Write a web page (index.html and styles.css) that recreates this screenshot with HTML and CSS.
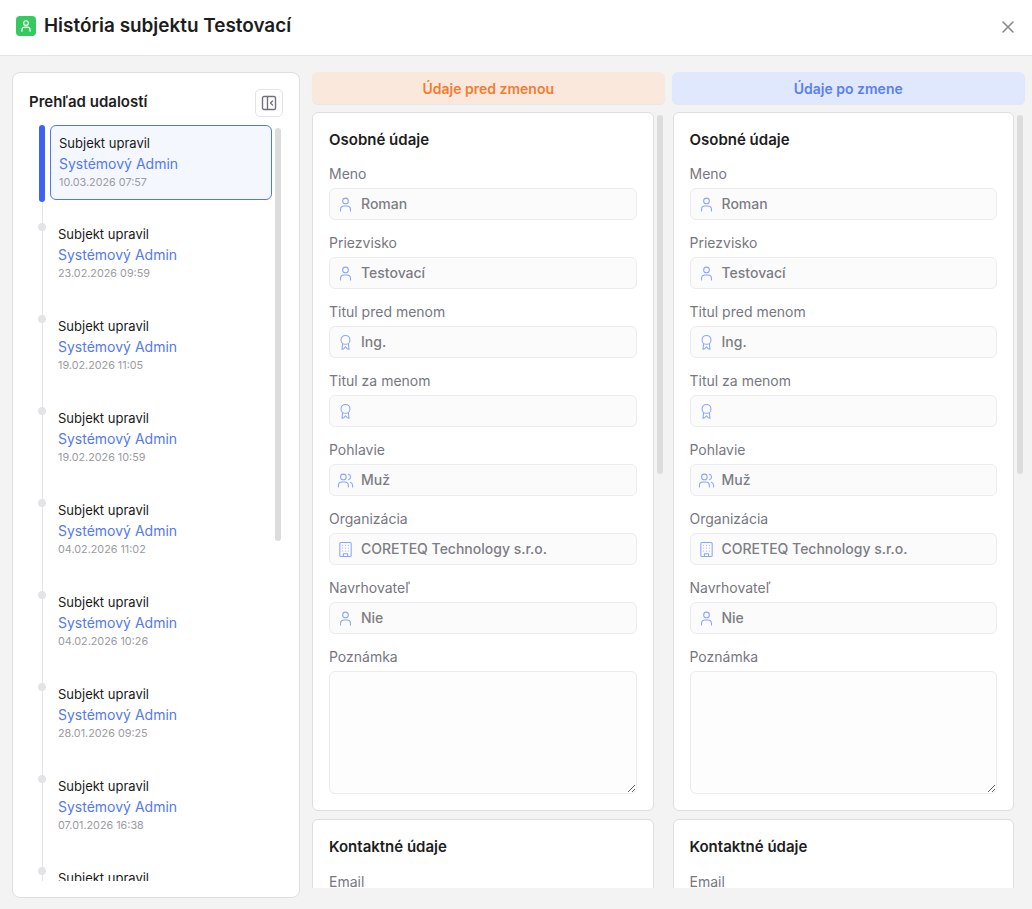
FILE: index.html
```html
<!DOCTYPE html>
<html lang="sk">
<head>
<meta charset="utf-8">
<title>História subjektu</title>
<link rel="stylesheet" href="styles.css">
</head>
<body>
<svg class="sprites" width="0" height="0" aria-hidden="true">
  <symbol id="i-user" viewBox="0 0 24 24"><circle cx="12" cy="7" r="4"/><path d="M5 21v-2a5 5 0 0 1 5-5h4a5 5 0 0 1 5 5v2"/></symbol>
  <symbol id="i-award" viewBox="0 0 24 24"><circle cx="12" cy="8.300" r="6.300"/><path d="M8 13.500 7 21.500l2.700-.8L12 18l2.300 2.700 2.700.8-1-8"/></symbol>
  <symbol id="i-users" viewBox="0 0 24 24"><circle cx="9" cy="7" r="4"/><path d="M2 21v-2a5 5 0 0 1 5-5h4a5 5 0 0 1 5 5v2M16 3.100a4 4 0 0 1 0 7.800M22 21v-2a5 5 0 0 0-3-4.500"/></symbol>
  <symbol id="i-building" viewBox="0 0 24 24"><rect x="4" y="2" width="16" height="20" rx="1.500"/><path d="M9 22v-4h6v4M8 6h.01M12 6h.01M16 6h.01M8 10h.01M12 10h.01M16 10h.01M8 14h.01M12 14h.01M16 14h.01"/></symbol>
</svg>
<header class="topbar">
  <div class="title-wrap">
    <span class="title-icon"><svg class="ico-white" width="14" height="14"><use href="#i-user"/></svg></span>
    <h1 class="title">História subjektu Testovací</h1>
  </div>
  <svg class="close" width="16" height="16" viewBox="0 0 16 16"><path d="M3 3l10 10M13 3 3 13"/></svg>
</header>
<main class="layout">
  <aside class="side">
    <div class="side-head">
      <h2 class="side-title">Prehľad udalostí</h2>
      <button class="collapse" type="button" aria-label="Zbaliť">
        <svg width="16" height="16" viewBox="0 0 16 16"><rect x="1.500" y="1.500" width="13" height="13" rx="1.500"/><path d="M6.500 1.500v13M11.500 6l-2 2 2 2"/></svg>
      </button>
    </div>
    <div class="side-scroll">
      <ol class="timeline">
        <li class="event active"><span class="rail"></span><div class="event-body"><div class="ev-action">Subjekt upravil</div><div class="ev-user">Systémový Admin</div><div class="ev-date">10.03.2026 07:57</div></div></li>
        <li class="event"><span class="rail"></span><div class="event-body"><div class="ev-action">Subjekt upravil</div><div class="ev-user">Systémový Admin</div><div class="ev-date">23.02.2026 09:59</div></div></li>
        <li class="event"><span class="rail"></span><div class="event-body"><div class="ev-action">Subjekt upravil</div><div class="ev-user">Systémový Admin</div><div class="ev-date">19.02.2026 11:05</div></div></li>
        <li class="event"><span class="rail"></span><div class="event-body"><div class="ev-action">Subjekt upravil</div><div class="ev-user">Systémový Admin</div><div class="ev-date">19.02.2026 10:59</div></div></li>
        <li class="event"><span class="rail"></span><div class="event-body"><div class="ev-action">Subjekt upravil</div><div class="ev-user">Systémový Admin</div><div class="ev-date">04.02.2026 11:02</div></div></li>
        <li class="event"><span class="rail"></span><div class="event-body"><div class="ev-action">Subjekt upravil</div><div class="ev-user">Systémový Admin</div><div class="ev-date">04.02.2026 10:26</div></div></li>
        <li class="event"><span class="rail"></span><div class="event-body"><div class="ev-action">Subjekt upravil</div><div class="ev-user">Systémový Admin</div><div class="ev-date">28.01.2026 09:25</div></div></li>
        <li class="event"><span class="rail"></span><div class="event-body"><div class="ev-action">Subjekt upravil</div><div class="ev-user">Systémový Admin</div><div class="ev-date">07.01.2026 16:38</div></div></li>
        <li class="event"><span class="rail"></span><div class="event-body"><div class="ev-action">Subjekt upravil</div></div></li>
      </ol>
      <div class="track"><div class="thumb thumb-side"></div></div>
    </div>
  </aside>

  <section class="col col-before">
    <div class="col-head before">Údaje pred zmenou</div>
    <div class="col-scroll">
      <div class="cards">
        <div class="card">
          <h3 class="card-title">Osobné údaje</h3>
          <div class="field"><label class="label">Meno</label><div class="input"><svg class="ico" width="17" height="17"><use href="#i-user"/></svg><span>Roman</span></div></div>
          <div class="field"><label class="label">Priezvisko</label><div class="input"><svg class="ico" width="17" height="17"><use href="#i-user"/></svg><span>Testovací</span></div></div>
          <div class="field"><label class="label">Titul pred menom</label><div class="input"><svg class="ico" width="17" height="17"><use href="#i-award"/></svg><span>Ing.</span></div></div>
          <div class="field"><label class="label">Titul za menom</label><div class="input"><svg class="ico" width="17" height="17"><use href="#i-award"/></svg><span></span></div></div>
          <div class="field"><label class="label">Pohlavie</label><div class="input"><svg class="ico" width="17" height="17"><use href="#i-users"/></svg><span>Muž</span></div></div>
          <div class="field"><label class="label">Organizácia</label><div class="input"><svg class="ico" width="17" height="17"><use href="#i-building"/></svg><span>CORETEQ Technology s.r.o.</span></div></div>
          <div class="field"><label class="label">Navrhovateľ</label><div class="input"><svg class="ico" width="17" height="17"><use href="#i-user"/></svg><span>Nie</span></div></div>
          <div class="field last"><label class="label">Poznámka</label><textarea class="area" readonly></textarea></div>
        </div>
        <div class="card contact">
          <h3 class="card-title">Kontaktné údaje</h3>
          <div class="field"><label class="label">Email</label></div>
        </div>
      </div>
      <div class="track"><div class="thumb thumb-col"></div></div>
    </div>
  </section>

  <section class="col col-after">
    <div class="col-head after">Údaje po zmene</div>
    <div class="col-scroll">
      <div class="cards">
        <div class="card">
          <h3 class="card-title">Osobné údaje</h3>
          <div class="field"><label class="label">Meno</label><div class="input"><svg class="ico" width="17" height="17"><use href="#i-user"/></svg><span>Roman</span></div></div>
          <div class="field"><label class="label">Priezvisko</label><div class="input"><svg class="ico" width="17" height="17"><use href="#i-user"/></svg><span>Testovací</span></div></div>
          <div class="field"><label class="label">Titul pred menom</label><div class="input"><svg class="ico" width="17" height="17"><use href="#i-award"/></svg><span>Ing.</span></div></div>
          <div class="field"><label class="label">Titul za menom</label><div class="input"><svg class="ico" width="17" height="17"><use href="#i-award"/></svg><span></span></div></div>
          <div class="field"><label class="label">Pohlavie</label><div class="input"><svg class="ico" width="17" height="17"><use href="#i-users"/></svg><span>Muž</span></div></div>
          <div class="field"><label class="label">Organizácia</label><div class="input"><svg class="ico" width="17" height="17"><use href="#i-building"/></svg><span>CORETEQ Technology s.r.o.</span></div></div>
          <div class="field"><label class="label">Navrhovateľ</label><div class="input"><svg class="ico" width="17" height="17"><use href="#i-user"/></svg><span>Nie</span></div></div>
          <div class="field last"><label class="label">Poznámka</label><textarea class="area" readonly></textarea></div>
        </div>
        <div class="card contact">
          <h3 class="card-title">Kontaktné údaje</h3>
          <div class="field"><label class="label">Email</label></div>
        </div>
      </div>
      <div class="track"><div class="thumb thumb-col"></div></div>
    </div>
  </section>
</main>
</body>
</html>
```
FILE: styles.css
```css
* { box-sizing: border-box; }
html, body { height: 100%; }
body {
  margin: 0;
  height: 909px;
  overflow: hidden;
  background: #f3f3f3;
  font-family: Inter, "Liberation Sans", sans-serif;
  color: #1d1d21;
  display: flex;
  flex-direction: column;
}
.sprites { position: absolute; }
.topbar {
  height: 56px;
  flex: none;
  background: #fff;
  border-bottom: 1px solid #e4e4e7;
  display: flex;
  align-items: center;
  justify-content: space-between;
  padding: 0 16px 4px;
}
.title-wrap { display: flex; align-items: center; gap: 8px; }
.title-icon {
  width: 20px;
  height: 20px;
  border-radius: 4px;
  background: #36c95f;
  display: flex;
  align-items: center;
  justify-content: center;
}
.ico-white { fill: none; stroke: #fff; stroke-width: 2; stroke-linecap: round; stroke-linejoin: round; }
.title { margin: 0; font-size: 18.900px; line-height: 28px; font-weight: 600; }
.close { margin-top: 2px; fill: none; stroke: #85858c; stroke-width: 1.500; stroke-linecap: round; }
.layout {
  flex: 1;
  min-height: 0;
  display: flex;
  gap: 12px;
  padding: 16px 6px 11px 12px;
}
.side {
  width: 288px;
  flex: none;
  background: #fff;
  border: 1px solid #dedee0;
  border-radius: 8px;
  padding: 16px;
  display: flex;
  flex-direction: column;
  gap: 8px;
}
.side-head { display: flex; align-items: center; justify-content: space-between; height: 28px; flex: none; }
.side-title { margin: 0 0 2px; font-size: 15px; line-height: 24px; font-weight: 600; }
.collapse {
  width: 28px;
  height: 28px;
  padding: 0;
  background: #fff;
  border: 1px solid #e4e4e7;
  border-radius: 5px;
  display: flex;
  align-items: center;
  justify-content: center;
}
.collapse svg { fill: none; stroke: #71717a; stroke-width: 1.400; stroke-linecap: round; stroke-linejoin: round; }
.side-scroll { flex: 1; min-height: 0; overflow: hidden; display: flex; padding-left: 9px; }
.timeline { list-style: none; margin: 0; padding: 0; width: 234px; flex: none; }
.event { height: 92px; display: flex; gap: 4px; position: relative; }
.rail { width: 8px; flex: none; position: relative; }
.rail::before {
  content: "";
  position: absolute;
  left: 3.500px;
  top: 0;
  bottom: 0;
  width: 1px;
  background: #e4e4e6;
}
.rail::after {
  content: "";
  position: absolute;
  left: 0;
  top: 6px;
  width: 8px;
  height: 8px;
  border-radius: 50%;
  background: #e4e4e7;
}
.active .rail::after {
  left: 1px;
  top: 0;
  width: 6px;
  height: 77px;
  border-radius: 3px;
  background: #3f62f4;
}
.event-body { flex: 1; min-width: 0; padding: 8px; align-self: flex-start; }
.active .event-body {
  background: #f4f7fe;
  border: 1px solid #5077ee;
  border-radius: 6px;
  height: 75px;
}
.ev-action { font-size: 13px; line-height: 18px; color: #1a1a1a; margin-bottom: 2px; }
.ev-user { font-size: 14px; line-height: 20px; color: #5479f2; }
.ev-date { font-size: 10.800px; line-height: 17px; color: #9b9ba1; }
.track { width: 12px; flex: none; padding: 3px 3px 0; }
.thumb { width: 6px; background: #dcdcdc; border-radius: 3px; }
.thumb-side { height: 413px; }
.thumb-col { height: 359px; }
.col { flex: 1; min-width: 0; display: flex; flex-direction: column; gap: 8px; }
.col-after { margin-left: -5px; }
.col-head {
  height: 32px;
  flex: none;
  margin-right: 1px;
  border-radius: 6px;
  box-shadow: 0 1px 1px rgba(0, 0, 0, .06);
  display: flex;
  align-items: center;
  justify-content: center;
  font-size: 14px;
  font-weight: 600;
}
.col-after .col-head { margin-left: -1px; }
.before { background: #fbe8dc; color: #f47c30; }
.after { background: #dfe8fd; color: #5b7ff0; }
.col-scroll { flex: 1; min-height: 0; overflow: hidden; display: flex; margin-bottom: 10px; }
.cards { flex: 1; min-width: 0; display: flex; flex-direction: column; gap: 8px; }
.card {
  flex: none;
  background: #fff;
  border: 1px solid #dedee0;
  border-radius: 6px;
  padding: 16px;
}
.card-title { margin: 0 0 13px; font-size: 15px; line-height: 22px; font-weight: 600; }
.contact .card-title { margin-bottom: 14px; }
.field { margin-bottom: 13px; }
.field.last { margin-bottom: 0; }
.label { display: block; font-size: 14px; line-height: 20px; color: #77777f; margin-bottom: 4px; }
.input {
  height: 32px;
  background: #fbfbfb;
  border: 1px solid #ececee;
  border-radius: 6px;
  padding: 0 7px;
  display: flex;
  align-items: center;
  gap: 7px;
  font-size: 14px;
  font-weight: 500;
  color: #7d7d85;
}
.input span { padding-bottom: 2px; }
.ico { flex: none; fill: none; stroke: #8aa5fb; stroke-width: 1.500; stroke-linecap: round; stroke-linejoin: round; }
.area {
  display: block;
  width: 100%;
  height: 123px;
  background: #fdfdfd;
  border: 1px solid #ececee;
  border-radius: 6px;
  outline: none;
  margin: 0;
}
```
